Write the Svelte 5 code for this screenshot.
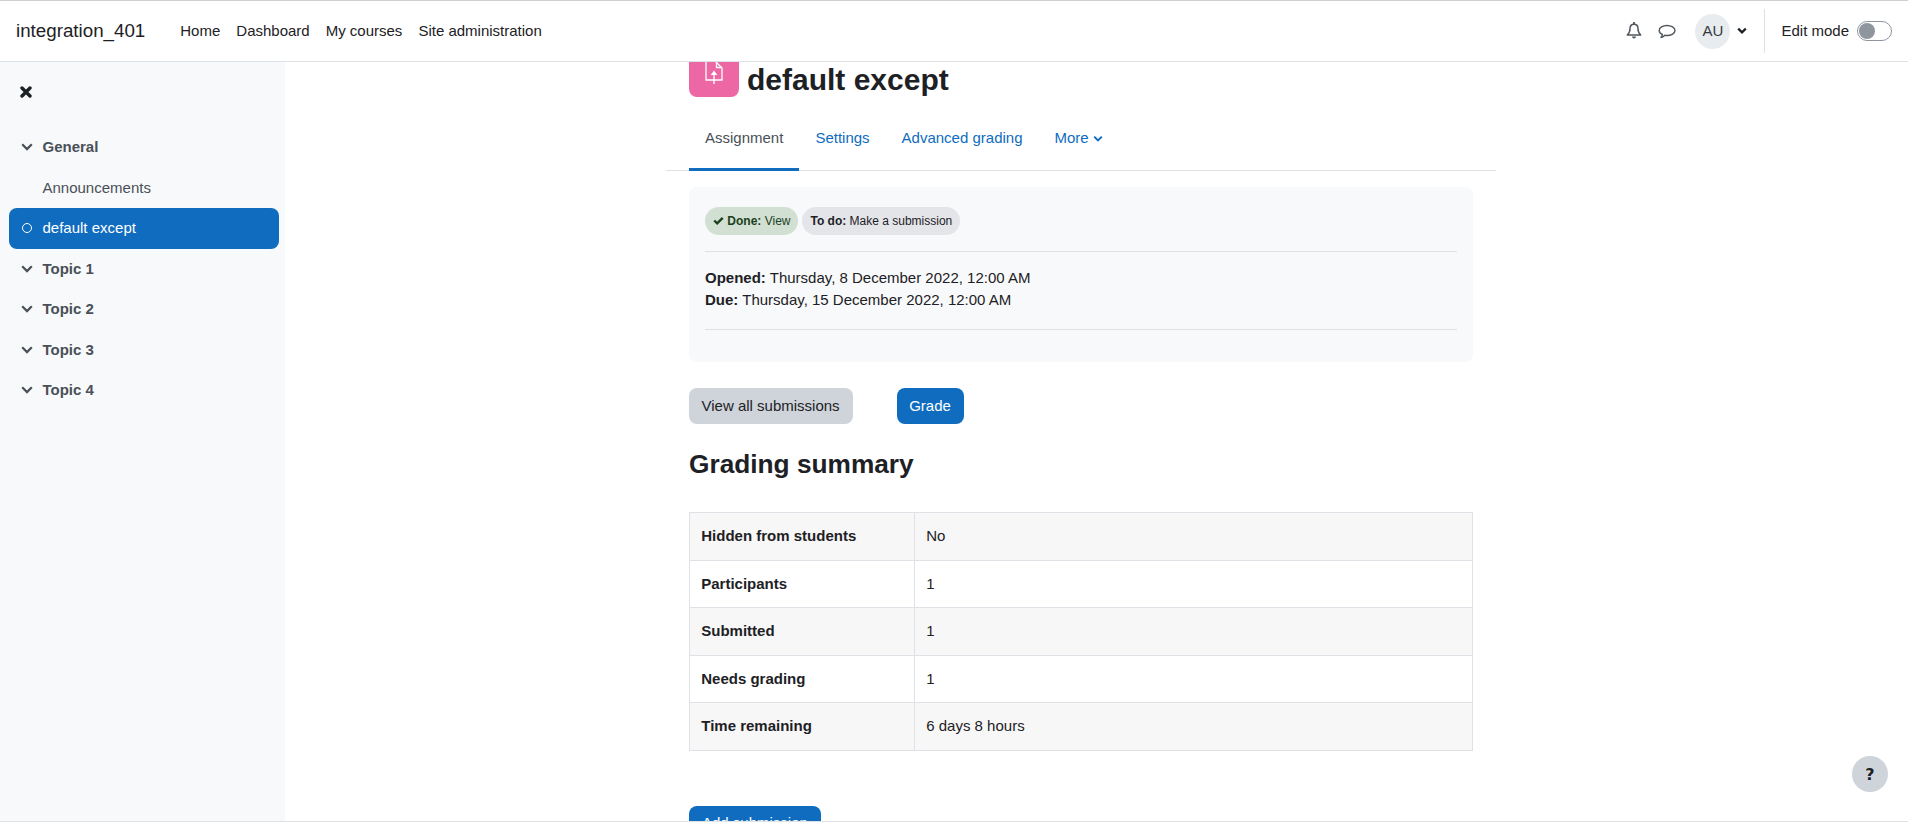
<script>
	const topics = ['Topic 1', 'Topic 2', 'Topic 3', 'Topic 4'];
	const navLinks = ['Home', 'Dashboard', 'My courses', 'Site administration'];
	const tabs = ['Settings', 'Advanced grading'];
	const rows = [
		['Hidden from students', 'No'],
		['Participants', '1'],
		['Submitted', '1'],
		['Needs grading', '1'],
		['Time remaining', '6 days 8 hours']
	];
</script>

<div class="page">
	<header class="navbar">
		<span class="brand">integration_401</span>
		<nav class="links">
			{#each navLinks as link}
				<span>{link}</span>
			{/each}
		</nav>
		<div class="usernav">
			<svg class="bell" viewBox="0 0 16 18" width="16" height="18">
				<path d="M8 2.200c-2.700 0-4 2-4 4.600 0 3.600-1.100 4.800-2.700 6.200h13.400c-1.600-1.400-2.700-2.600-2.700-6.200C12 4.200 10.700 2.200 8 2.200z" fill="none" stroke="#4f565c" stroke-width="1.500" stroke-linejoin="round"/>
				<path d="M8 .5v1.700" stroke="#4f565c" stroke-width="1.800" stroke-linecap="round"/>
				<path d="M6 14.500a2 2 0 0 0 4 0z" fill="#4f565c"/>
			</svg>
			<svg class="chat" viewBox="0 0 18 16" width="18" height="16">
				<path d="M9 1.500c4.200 0 8 2.200 8 5s-3.800 5-8 5c-.8 0-1.500-.1-2.200-.2-1 1-2.300 2-3.800 2.200.8-1 1.300-2 1.400-3C2.400 9.600 1.200 8.100 1.200 6.500c0-2.800 3.600-5 7.800-5z" fill="none" stroke="#4f565c" stroke-width="1.400" stroke-linejoin="round"/>
			</svg>
			<span class="avatar">AU</span>
			<svg class="caret" viewBox="0 0 10 8" width="10" height="8">
				<path d="M1.200 1.600 5 5.400l3.800-3.800" fill="none" stroke="#1d2125" stroke-width="2.200"/>
			</svg>
			<div class="editmode">
				<span>Edit mode</span>
				<span class="toggle"><span class="knob"></span></span>
			</div>
		</div>
	</header>

	<div class="body">
		<aside class="sidebar">
			<svg class="close" viewBox="0 0 12 12" width="12" height="12">
				<path d="M2 2l8 8M10 2l-8 8" stroke="#1d2125" stroke-width="3.400" stroke-linecap="round"/>
			</svg>
			<ul class="index">
				<li class="section">
					<svg viewBox="0 0 12 8" width="12" height="8"><path d="M1.200 1.300 6 6.100l4.800-4.800" fill="none" stroke="#495057" stroke-width="2.200"/></svg>
					<span>General</span>
				</li>
				<li class="activity">Announcements</li>
				<li class="activity current">
					<span class="dot"></span>
					<span>default except</span>
				</li>
				{#each topics as topic}
					<li class="section">
						<svg viewBox="0 0 12 8" width="12" height="8"><path d="M1.200 1.300 6 6.100l4.800-4.800" fill="none" stroke="#495057" stroke-width="2.200"/></svg>
						<span>{topic}</span>
					</li>
				{/each}
			</ul>
		</aside>

		<main class="main">
			<div class="column">
				<div class="heading">
					<div class="modicon">
						<svg viewBox="0 0 32 32" width="32" height="32">
							<path d="M8 0v24h16V12l-6-6" fill="none" stroke="#fff" stroke-width="1.300"/>
							<path d="M18.500 6v5.500H24" fill="none" stroke="#fff" stroke-width="1.300"/>
							<path d="M16 28V16" stroke="#fff" stroke-width="1.400"/>
							<path d="M16 14.500l3.300 4.500h-6.600z" fill="#fff"/>
						</svg>
					</div>
					<h1>default except</h1>
				</div>

				<div class="tabs">
					<span class="tab active">Assignment</span>
					{#each tabs as tab}
						<span class="tab">{tab}</span>
					{/each}
					<span class="tab">More
						<svg viewBox="0 0 10 8" width="10" height="8"><path d="M1.200 1.600 5 5.400l3.800-3.800" fill="none" stroke="#0f6cbf" stroke-width="2"/></svg>
					</span>
				</div>

				<div class="inner">
					<section class="summary">
						<div class="pills">
							<span class="pill done">
								<svg viewBox="0 0 12 10" width="11" height="9"><path d="M1.300 5 4.500 8.200 10.700 2" fill="none" stroke="#1c3f1c" stroke-width="2.600"/></svg>
								<b>Done:</b> View
							</span>
							<span class="pill todo"><b>To do:</b> Make a submission</span>
						</div>
						<div class="dates">
							<div><b>Opened:</b> Thursday, 8 December 2022, 12:00 AM</div>
							<div><b>Due:</b> Thursday, 15 December 2022, 12:00 AM</div>
						</div>
					</section>

					<div class="actions">
						<button class="btn secondary">View all submissions</button>
						<button class="btn primary">Grade</button>
					</div>

					<h2>Grading summary</h2>

					<table>
						<tbody>
							{#each rows as [label, value]}
								<tr>
									<th>{label}</th>
									<td>{value}</td>
								</tr>
							{/each}
						</tbody>
					</table>

					<button class="btn primary add">Add submission</button>
				</div>
			</div>
		</main>
	</div>

	<button class="help">?</button>
</div>

<style>
	:global(body) {
		margin: 0;
		background: #fff;
	}
	.page {
		position: relative;
		height: 822px;
		overflow: hidden;
		display: flex;
		flex-direction: column;
		box-sizing: border-box;
		border-top: 1px solid #d0d0d0;
		border-bottom: 1px solid #dee2e6;
		font-family: "Liberation Sans", Arial, sans-serif;
		font-size: 15px;
		line-height: 22.5px;
		color: #1d2125;
	}
	.navbar {
		flex: none;
		height: 61px;
		box-sizing: border-box;
		display: flex;
		align-items: center;
		padding: 0 16px;
		border-bottom: 1px solid #dee2e6;
		background: #fff;
	}
	.brand {
		font-size: 18.75px;
		margin-right: 35px;
	}
	.links {
		display: flex;
		gap: 16px;
	}
	.usernav {
		margin-left: auto;
		display: flex;
		align-items: center;
	}
	.bell {
		margin-right: 16px;
	}
	.chat {
		margin: 2px 19px 0 0;
	}
	.avatar {
		width: 35px;
		height: 35px;
		border-radius: 50%;
		background: #e9ecef;
		display: flex;
		align-items: center;
		justify-content: center;
		color: #343a40;
		margin-right: 7px;
	}
	.editmode {
		margin-left: 17px;
		height: 44px;
		border-left: 1px solid #dee2e6;
		padding-left: 16px;
		display: flex;
		align-items: center;
		gap: 8px;
	}
	.toggle {
		width: 35px;
		height: 20px;
		box-sizing: border-box;
		border: 1px solid #8f959e;
		border-radius: 10px;
		display: flex;
		align-items: center;
		padding-left: 1px;
	}
	.knob {
		width: 16px;
		height: 16px;
		border-radius: 50%;
		background: #8f959e;
	}
	.body {
		flex: 1;
		display: flex;
		min-height: 0;
	}
	.sidebar {
		flex: none;
		width: 285px;
		box-sizing: border-box;
		padding: 24px 6px 0 9px;
		background: #f8f9fa;
	}
	.close {
		display: block;
		margin-left: 11px;
	}
	.index {
		list-style: none;
		margin: 29px 0 0;
		padding: 0;
		color: #495057;
	}
	.index li {
		height: 40.500px;
		box-sizing: border-box;
		display: flex;
		align-items: center;
		padding-left: 12px;
		gap: 9.500px;
	}
	.section {
		font-weight: 700;
	}
	.activity {
		padding-left: 33.500px !important;
	}
	.current {
		background: #0f6cbf;
		color: #fff;
		border-radius: 8px;
		padding-left: 13px !important;
		gap: 10.500px !important;
	}
	.dot {
		width: 10px;
		height: 10px;
		box-sizing: border-box;
		border: 1px solid #fff;
		border-radius: 50%;
	}
	.main {
		flex: 1;
		min-width: 0;
		overflow: hidden;
		display: flex;
		justify-content: center;
		padding-right: 31px;
	}
	.column {
		width: 830px;
		flex: none;
		margin-top: -15px;
	}
	.heading {
		display: flex;
		align-items: flex-end;
		padding-left: 23px;
		gap: 8px;
	}
	.modicon {
		width: 50px;
		height: 50px;
		margin-bottom: 1px;
		border-radius: 8px;
		background: #ee67a5;
		display: flex;
		align-items: center;
		justify-content: center;
	}
	h1 {
		margin: 0;
		font-size: 30px;
		line-height: 36px;
		font-weight: 700;
	}
	.tabs {
		margin-top: 18px;
		display: flex;
		padding-left: 23px;
		height: 55px;
		box-sizing: border-box;
		border-bottom: 1px solid #dee2e6;
	}
	.tab {
		padding: 0 16px;
		height: 55px;
		box-sizing: border-box;
		line-height: 44px;
		color: #0f6cbf;
	}
	.tab.active {
		color: #495057;
		border-bottom: 3px solid #0f6cbf;
	}
	.inner {
		padding: 16px 23px 0;
	}
	.summary {
		background: #f8f9fa;
		border-radius: 8px;
		padding: 20px 16px 0;
		height: 175px;
		box-sizing: border-box;
	}
	.pills {
		display: flex;
		gap: 4px;
		padding-bottom: 16px;
		border-bottom: 1px solid #dee2e6;
	}
	.pill {
		height: 28px;
		box-sizing: border-box;
		border-radius: 14px;
		padding: 0 8px;
		font-size: 12px;
		line-height: 28px;
	}
	.done {
		background: #d2dfd3;
		color: #1c3f1c;
	}
	.todo {
		background: #e3e5e9;
	}
	.dates {
		padding: 15px 0 18px;
		border-bottom: 1px solid #dee2e6;
	}
	.dates div {
		height: 22px;
	}
	.actions {
		display: flex;
		gap: 44px;
		margin-top: 26px;
	}
	.btn {
		font: inherit;
		height: 36px;
		padding: 0 13px 0 12.500px;
		border: none;
		border-radius: 8px;
	}
	.secondary {
		background: #ced4da;
		color: #1d2125;
	}
	.primary {
		background: #0f6cbf;
		color: #fff;
	}
	h2 {
		margin: 24px 0 0;
		font-size: 26.250px;
		line-height: 32px;
		font-weight: 700;
	}
	table {
		margin-top: 32px;
		width: 100%;
		border-collapse: collapse;
	}
	th, td {
		height: 47.500px;
		box-sizing: border-box;
		padding: 0 11.250px;
		border: 1px solid #dee2e6;
		text-align: left;
	}
	th {
		width: 225px;
	}
	tr:nth-child(odd) {
		background: #f7f7f7;
	}
	.add {
		display: block;
		margin-top: 55px;
		padding: 0 13px;
	}
	.help {
		position: absolute;
		left: 1852px;
		top: 755px;
		width: 36px;
		height: 36px;
		border: none;
		border-radius: 50%;
		background: #ced4da;
		color: #1d2125;
		font: 700 16px "DejaVu Sans", sans-serif;
		padding: 0;
	}
</style>
